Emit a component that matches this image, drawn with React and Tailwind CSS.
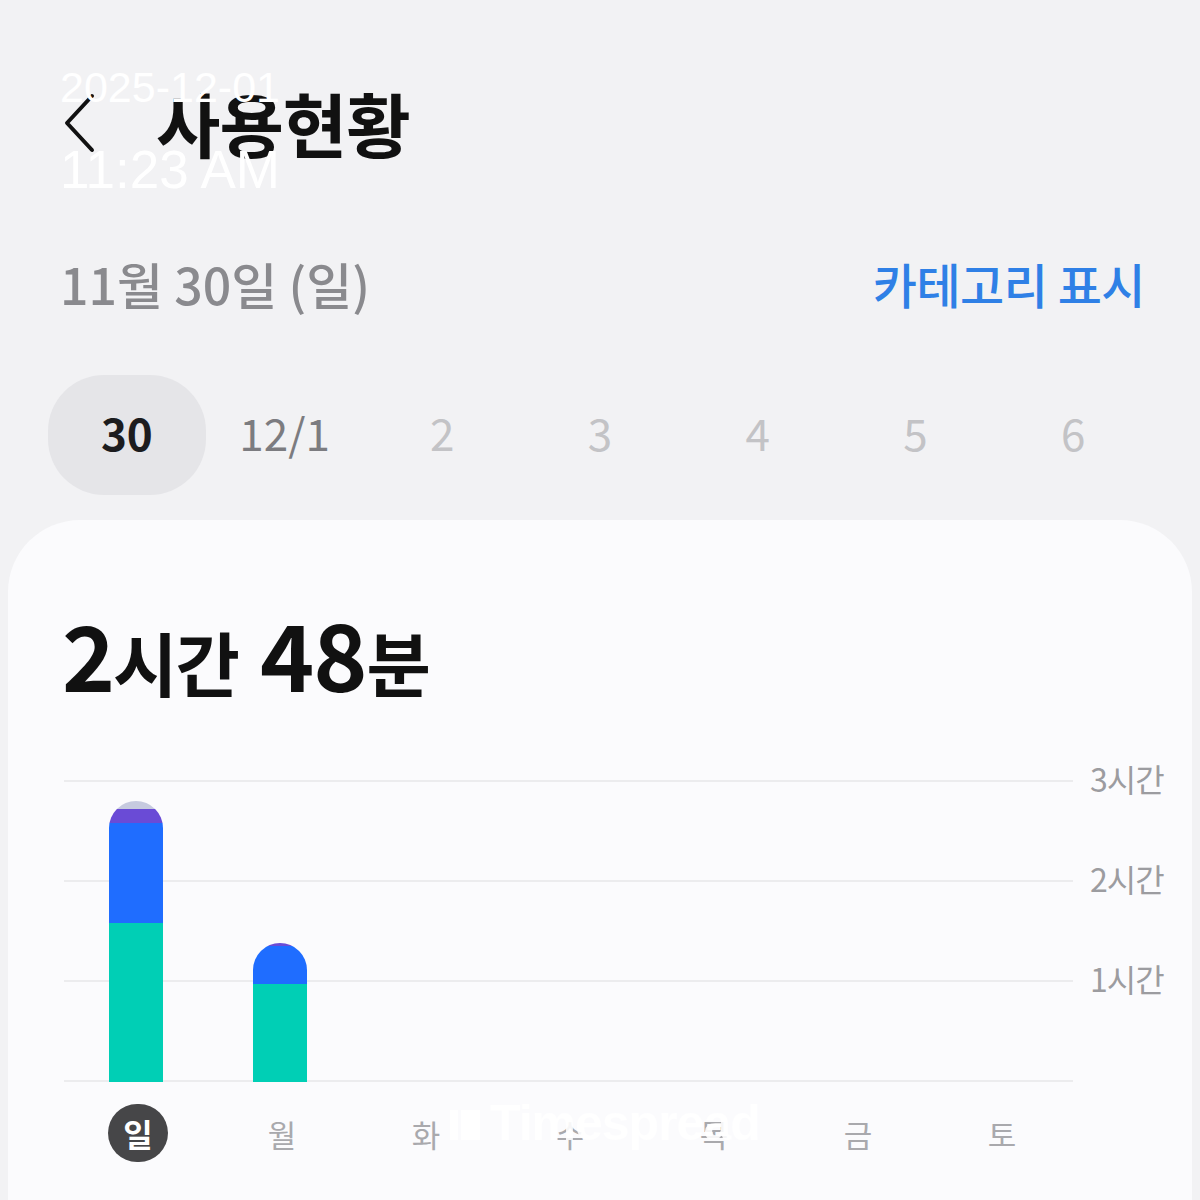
import React from "react";

const FONT = { fontFamily: '"Noto Sans CJK KR", "Noto Sans", sans-serif' };

const dates = [
  { label: "30", tone: "sel" },
  { label: "12/1", tone: "mid" },
  { label: "2", tone: "dim" },
  { label: "3", tone: "dim" },
  { label: "4", tone: "dim" },
  { label: "5", tone: "dim" },
  { label: "6", tone: "dim" },
];

// bar segments, top to bottom, heights in px
const bars = [
  [
    { h: 8, c: "bg-[#c6cadf]" },
    { h: 14, c: "bg-[#6a4bd6]" },
    { h: 100, c: "bg-[#1f6dff]" },
    { h: 159, c: "bg-[#00cfb5]" },
  ],
  [
    { h: 3, c: "bg-[#6a4bd6]" },
    { h: 38, c: "bg-[#1f6dff]" },
    { h: 98, c: "bg-[#00cfb5]" },
  ],
  [],
  [],
  [],
  [],
  [],
];

const days = ["일", "월", "화", "수", "목", "금", "토"];

const Chevron = () => (
  <svg width="36" height="62" viewBox="0 0 36 62" fill="none">
    <path
      d="M30 4 L5 31 L30 58"
      stroke="#111"
      strokeWidth="4"
      strokeLinecap="round"
      strokeLinejoin="round"
    />
  </svg>
);

export default function App() {
  return (
    <div
      className="relative w-[1200px] h-[1200px] overflow-hidden bg-[#f2f2f4]"
      style={FONT}
    >
      {/* header */}
      <div className="flex items-center h-[80px] mt-[83px] pl-[62px]">
        <Chevron />
        <h1 className="ml-[58px] text-[70px] font-bold leading-none text-[#111] tracking-[-1px]">
          사용현황
        </h1>
      </div>

      {/* date + category */}
      <div className="flex items-center justify-between h-[60px] mt-[90px] pl-[60px] pr-[55px]">
        <span className="text-[50px] font-medium text-[#8a8a8e] tracking-[0px] leading-none">
          11월 30일 (일)
        </span>
        <span className="text-[48px] font-medium text-[#2f80e6] tracking-[-0.5px] leading-none">
          카테고리 표시
        </span>
      </div>

      {/* day picker */}
      <div className="grid grid-cols-7 w-[1104px] ml-[48px] mt-[62px] h-[120px]">
        {dates.map((d) => (
          <div
            key={d.label}
            className={`flex items-center justify-center rounded-[56px] ${
              d.tone === "sel" ? "bg-[#e5e5e8]" : ""
            }`}
          >
            <span
              className={`text-[44px] leading-none -mt-[6px] ${
                d.tone === "sel"
                  ? "font-semibold text-[#1c1c1e]"
                  : d.tone === "mid"
                  ? "text-[#7c7c80]"
                  : "text-[#c3c3c6]"
              }`}
            >
              {d.label}
            </span>
          </div>
        ))}
      </div>

      {/* card */}
      <div className="mx-[8px] mt-[25px] h-[700px] rounded-t-[72px] bg-[#fbfbfd] pt-[86px]">
        <div className="flex items-baseline pl-[54px] text-[#111] font-bold leading-none">
          <span className="text-[90px] tracking-[-2px]">2</span>
          <span className="text-[70px] tracking-[-2px]">시간</span>
          <span className="text-[92px] tracking-[-1px] ml-[22px]">48</span>
          <span className="text-[70px]">분</span>
        </div>

        {/* chart */}
        <div className="flex mt-[82px] ml-[56px]">
          <div className="relative w-[1009px] h-[302px]">
            <div className="flex flex-col h-full">
              <div className="flex-1 border-t-2 border-[#ececee]" />
              <div className="flex-1 border-t-2 border-[#ececee]" />
              <div className="flex-1 border-t-2 border-b-2 border-[#ececee]" />
            </div>
            <div className="absolute inset-0 grid grid-cols-7 items-end">
              {bars.map((segs, i) => (
                <div key={i} className="flex justify-center">
                  {segs.length > 0 && (
                    <div className="flex flex-col w-[54px] rounded-t-[27px] overflow-hidden">
                      {segs.map((s, j) => (
                        <div key={j} className={s.c} style={{ height: s.h }} />
                      ))}
                    </div>
                  )}
                </div>
              ))}
            </div>
          </div>
          <div className="flex flex-col gap-[66px] ml-[17px] -mt-[19px] text-[32px] leading-none text-[#9c9ca0] tracking-[-1px]">
            <span className="h-[34px] flex items-center">3시간</span>
            <span className="h-[34px] flex items-center">2시간</span>
            <span className="h-[34px] flex items-center">1시간</span>
          </div>
        </div>

        {/* weekday labels */}
        <div className="grid grid-cols-7 w-[1008px] ml-[58px] mt-[22px]">
          {days.map((d, i) => (
            <div key={d} className="flex justify-center">
              {i === 0 ? (
                <div className="flex items-center justify-center w-[60px] h-[58px] rounded-full bg-[#464648] text-[32px] font-semibold text-white leading-none">
                  {d}
                </div>
              ) : (
                <div className="flex items-center justify-center h-[58px] text-[31px] text-[#a9a9ad] leading-none">
                  {d}
                </div>
              )}
            </div>
          ))}
        </div>
      </div>

      {/* timestamp overlay */}
      <div
        className="absolute left-[60px] top-[66px] text-white leading-none"
        style={{ fontFamily: '"Liberation Sans", Arial, sans-serif' }}
      >
        <div className="text-[43px]">2025-12-01</div>
        <div className="text-[53px] mt-[34px]">11:23 AM</div>
      </div>

      {/* watermark */}
      <div className="absolute left-[450px] top-[1098px] flex items-center gap-[10px] text-white/90">
        <svg width="30" height="34" viewBox="0 0 30 34">
          <rect x="0" y="4" width="8" height="30" fill="white" fillOpacity="0.9" />
          <rect x="11" y="4" width="19" height="30" fill="white" fillOpacity="0.9" />
        </svg>
        <span
          className="text-[50px] font-bold leading-none tracking-[-1px]"
          style={{ fontFamily: '"Liberation Sans", Arial, sans-serif' }}
        >
          Timespread
        </span>
      </div>
    </div>
  );
}
